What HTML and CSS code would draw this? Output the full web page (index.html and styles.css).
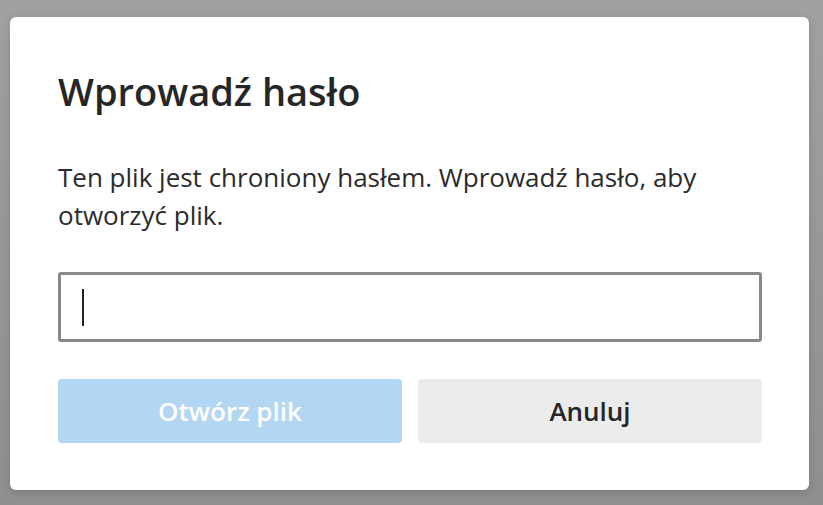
FILE: index.html
```html
<!DOCTYPE html>
<html lang="pl">
<head>
<meta charset="utf-8">
<link rel="stylesheet" href="styles.css">
</head>
<body>
<div class="dialog">
  <h1 class="title">Wprowadź hasło</h1>
  <p class="message">Ten plik jest chroniony hasłem. Wprowadź hasło, aby otworzyć plik.</p>
  <div class="field"><span class="caret"></span></div>
  <div class="actions">
    <button class="btn btn-primary" disabled>Otwórz plik</button>
    <button class="btn btn-secondary">Anuluj</button>
  </div>
</div>
</body>
</html>
```
FILE: styles.css
```css
html, body {
  margin: 0;
  padding: 0;
}
body {
  width: 823px;
  height: 505px;
  background: linear-gradient(#a1a1a1, #8f8f8f);
  font-family: "Open Sans", "Noto Sans", sans-serif;
  overflow: hidden;
}
.dialog {
  box-sizing: border-box;
  margin: 17px 0 0 10px;
  width: 799px;
  height: 473px;
  background: #fff;
  border-radius: 6px;
  padding: 0 47px 0 48px;
  display: flex;
  flex-direction: column;
  box-shadow: 0 2px 10px rgba(0,0,0,0.15);
}
.title {
  margin: 50px 0 0;
  font-size: 38px;
  font-weight: 600;
  line-height: 48px;
  color: #262626;
}
.message {
  margin: 43px 0 0;
  font-size: 26px;
  line-height: 38px;
  color: #2b2b2b;
}
.field {
  box-sizing: border-box;
  margin-top: 38px;
  height: 70px;
  border: 3px solid #898989;
  border-radius: 3px;
  display: flex;
  align-items: center;
  padding-left: 21px;
}
.caret {
  width: 2px;
  height: 37px;
  background: #222;
}
.actions {
  margin-top: 37px;
  display: grid;
  grid-template-columns: 1fr 1fr;
  gap: 16px;
}
.btn {
  height: 64px;
  border: none;
  border-radius: 4px;
  font-family: inherit;
  font-size: 26px;
  font-weight: 600;
}
.btn-primary {
  background: #b3d6f2;
  color: #fff;
}
.btn-secondary {
  background: #ececec;
  color: #262626;
}
```
